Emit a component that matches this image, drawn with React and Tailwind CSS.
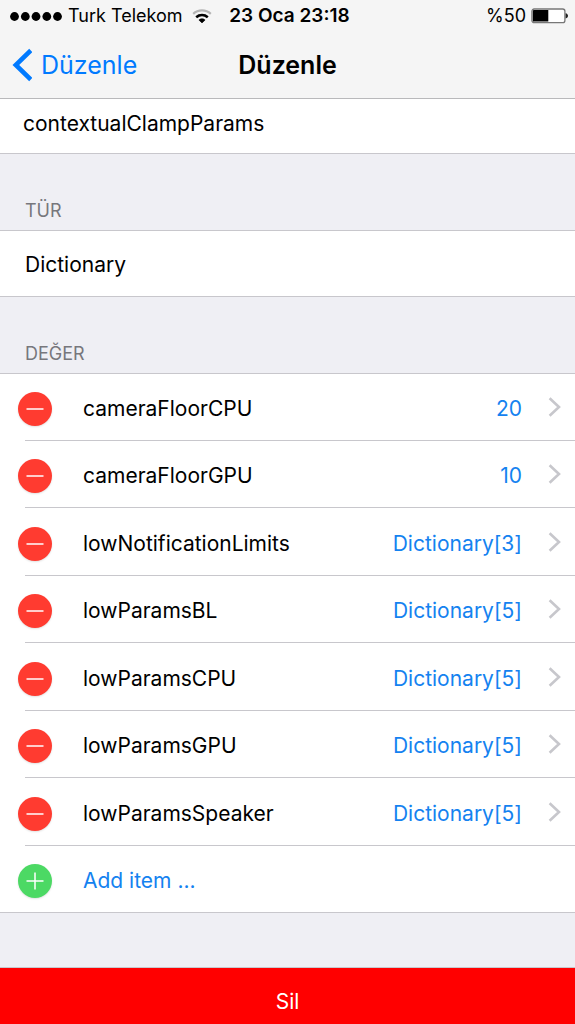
import React from "react";

const items = [
  { name: "cameraFloorCPU", value: "20" },
  { name: "cameraFloorGPU", value: "10" },
  { name: "lowNotificationLimits", value: "Dictionary[3]" },
  { name: "lowParamsBL", value: "Dictionary[5]" },
  { name: "lowParamsCPU", value: "Dictionary[5]" },
  { name: "lowParamsGPU", value: "Dictionary[5]" },
  { name: "lowParamsSpeaker", value: "Dictionary[5]" },
];

function Signal() {
  return (
    <svg className="h-[9px] w-[52px]" viewBox="0 0 52 9" aria-hidden="true">
      {[4.5, 15.3, 26, 36.8, 47.5].map((cx) => (
        <circle key={cx} cx={cx} cy="4.5" r="4.4" fill="#000" />
      ))}
    </svg>
  );
}

function Wifi() {
  return (
    <svg className="ml-[9px] h-[14px] w-5" viewBox="0 0 20 14" fill="none" aria-hidden="true">
      <path d="M1.2 4.9C6.2.3 13.8.3 18.8 4.9" stroke="#b4b4b4" strokeWidth="2.2" />
      <path d="M4.2 8.2C7.6 5.4 12.4 5.4 15.8 8.2" stroke="#000" strokeWidth="2.6" />
      <path d="M10 13.9 6.9 11C8.7 9.3 11.3 9.3 13.1 11Z" fill="#000" stroke="#000" strokeWidth="0.6" />
    </svg>
  );
}

function Battery() {
  return (
    <svg className="ml-[5px] h-[16px] w-[38px]" viewBox="0 0 38 16" fill="none" aria-hidden="true">
      <rect x="0.9" y="1" width="33" height="13.6" rx="2.2" fill="#fff" stroke="#777" strokeWidth="1.3" />
      <path d="M3 2h14.3v11.6H3a1.2 1.2 0 0 1-1.2-1.2V3.2A1.2 1.2 0 0 1 3 2Z" fill="#000" />
      <path d="M34.6 5.2c3.2.6 3.2 4.6 0 5.2Z" fill="#222" />
    </svg>
  );
}

function RoundButton({ label, add }) {
  return (
    <button
      type="button"
      aria-label={label}
      className={`-ml-[7px] flex size-[34px] shrink-0 items-center justify-center rounded-full shadow-[0_1px_2px_rgba(0,0,0,0.12)] ${
        add ? "bg-[#4cd964]" : "bg-[#ff3b30]"
      }`}
    >
      <svg className="size-[18px]" viewBox="0 0 18 18" stroke="#fff" strokeWidth="1.5" aria-hidden="true">
        <path d={add ? "M.5 9h17M9 .5v17" : "M.5 9h17"} />
      </svg>
    </button>
  );
}

function SectionTitle({ children }) {
  return (
    <h2 className="flex h-[76px] items-end px-[25px] pb-[7px] text-lg leading-6 text-[#77777c]">
      {children}
    </h2>
  );
}

export default function App() {
  return (
    <div className="flex min-h-screen flex-col bg-[#efeff4] font-['Inter',sans-serif] text-[21px] leading-7 text-black">
      <header className="border-b border-[#b9b9bb] bg-[#f5f5f5]">
        <div className="grid h-8 grid-cols-[1fr_auto_1fr] items-center pr-[6px] pl-[10px] text-lg leading-6">
          <div className="flex items-center">
            <Signal />
            <span className="ml-[6px] whitespace-nowrap">Turk Telekom</span>
            <Wifi />
          </div>
          <span className="text-[19px] font-semibold whitespace-nowrap">23 Oca 23:18</span>
          <div className="flex items-center justify-end">
            <span>%50</span>
            <Battery />
          </div>
        </div>
        <div className="grid h-[66px] grid-cols-[1fr_auto_1fr] items-center px-3 text-[25px] leading-8">
          <a href="#back" className="flex items-center gap-[9px] text-[#007aff]">
            <svg className="h-[34px] w-5" viewBox="0 0 20 34" fill="none" stroke="currentColor" strokeWidth="4.6" aria-hidden="true">
              <path d="M18.8 2.4 3.8 17l15 14.6" />
            </svg>
            Düzenle
          </a>
          <h1 className="font-semibold">Düzenle</h1>
        </div>
      </header>

      <main className="flex grow flex-col">
        <div className="border-b border-[#c8c7cc] bg-white">
          <input
            type="text"
            aria-label="Ad"
            defaultValue="contextualClampParams"
            className="block h-[54px] w-full bg-transparent px-[23px] pb-[6px] outline-none"
          />
        </div>

        <section>
          <SectionTitle>TÜR</SectionTitle>
          <p className="flex h-[67px] items-center border-y border-[#c8c7cc] bg-white px-[25px] pt-[2px]">Dictionary</p>
        </section>

        <section>
          <SectionTitle>DEĞER</SectionTitle>
          <ul className="border-y border-[#c8c7cc] bg-white">
            {items.map((item) => (
              <li
                key={item.name}
                className="ml-[25px] flex h-[67px] items-center border-b border-[#c8c7cc] pt-1 pr-[14px] not-first:odd:h-[68px]"
              >
                <RoundButton label={`${item.name} sil`} />
                <a href={`#${item.name}`} className="ml-[31px] flex grow items-center">
                  <span className="grow">{item.name}</span>
                  <span className="text-[#1482f0]">{item.value}</span>
                  <svg className="mb-1 ml-[26px] h-5 w-[13px]" viewBox="0 0 13 20" fill="none" stroke="#c7c7cc" strokeWidth="2.6" aria-hidden="true">
                    <path d="M1.6 1.2 11 10l-9.4 8.8" />
                  </svg>
                </a>
              </li>
            ))}
            <li className="ml-[25px] flex h-[66px] items-center pt-1">
              <RoundButton add label="Ekle" />
              <a href="#add" className="ml-[31px] text-[#1482f0]">Add item ...</a>
            </li>
          </ul>
        </section>

        <button type="button" className="mt-[54px] grow border-t border-[#c8c7cc] bg-[#ff0000] pt-[11px] text-white">
          Sil
        </button>
      </main>
    </div>
  );
}
